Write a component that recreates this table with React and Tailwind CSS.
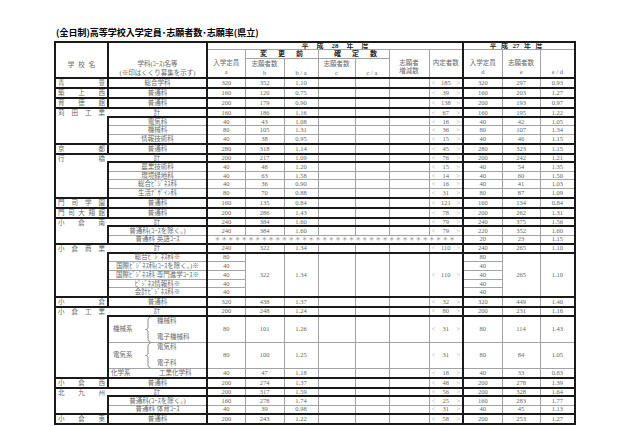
import React from "react";

// border helpers (collapsed table, wider border wins)
const base = "border border-[#a3a3a3] p-0 text-center";
const T = "border-t-2 border-t-[#1a1a1a]";
const R = "border-r-2 border-r-[#1a1a1a]";
const L = "border-l-2 border-l-[#1a1a1a]";
const rowH = "h-[8.8px]";

const STARS = "＊".repeat(36);

function Name({ name }) {
  return (
    <div className="flex h-[8px] items-center justify-between px-[2px]">
      {[...name].map((c, i) => (
        <span key={i}>{c}</span>
      ))}
    </div>
  );
}

function Nt({ v }) {
  return (
    <div className="flex items-center justify-between px-[2px]">
      <span className="text-[#b0b0b0]">&lt;</span>
      <span>{v}</span>
      <span className="text-[#b0b0b0]">&gt;</span>
    </div>
  );
}

// v = [a, b, b/a, naitei, d, e, e/d]
function Vals({ v, top }) {
  const t = top ? T : "";
  return (
    <>
      <td className={`${base} ${t}`}>{v[0]}</td>
      <td className={`${base} ${t}`}>{v[1]}</td>
      <td className={`${base} ${t}`}>{v[2]}</td>
      <td className={`${base} ${t}`}></td>
      <td className={`${base} ${t}`}></td>
      <td className={`${base} ${t}`}></td>
      <td className={`${base} ${t} ${R}`}>
        <Nt v={v[3]} />
      </td>
      <td className={`${base} ${t}`}>{v[4]}</td>
      <td className={`${base} ${t}`}>{v[5]}</td>
      <td className={`${base} ${t}`}>{v[6]}</td>
    </>
  );
}

function Single({ name, dept, v }) {
  return (
    <tr className={rowH}>
      <td className={`${base} ${T} ${L} ${R}`}>
        <Name name={name} />
      </td>
      <td className={`${base} ${T} ${R}`}>{dept}</td>
      <Vals v={v} top />
    </tr>
  );
}

function Multi({ name, v, subs }) {
  return (
    <>
      <tr className={rowH}>
        <td rowSpan={1 + subs.length} className={`${base} ${T} ${L} border-r-0 align-top`}>
          <Name name={name} />
        </td>
        <td className={`${base} ${T} ${R} border-l-0`}>計</td>
        <Vals v={v} top />
      </tr>
      {subs.map((s, i) => (
        <tr key={i} className={rowH}>
          <td className={`${base} ${L} ${R} ${i === 0 ? T : ""}`}>{s[0]}</td>
          <Vals v={s.slice(1)} top={i === 0} />
        </tr>
      ))}
    </>
  );
}

function Brace() {
  return (
    <svg width="6" height="25" viewBox="0 0 6 26" className="shrink-0">
      <path
        d="M5.5 0.5 C3.5 0.5 3 1.5 3 3.5 L3 10.5 C3 12.3 2 13 0.5 13 C2 13 3 13.7 3 15.5 L3 22.5 C3 24.5 3.5 25.5 5.5 25.5"
        fill="none"
        stroke="#6a6a6a"
        strokeWidth="0.8"
      />
    </svg>
  );
}

function Kei({ label, a, b }) {
  return (
    <div className="flex items-center pl-[4px]">
      <span className="w-[32px] text-left">{label}</span>
      <Brace />
      <div className="ml-[6px] flex h-[22px] flex-col justify-between text-left">
        <span>{a}</span>
        <span>{b}</span>
      </div>
    </div>
  );
}

function Header() {
  const hb = "font-bold text-[#262626] text-[7px]";
  return (
    <thead>
      <tr className="h-[8.2px]">
        <td rowSpan={3} className={`${base} ${L} ${R} align-top`}>
          <div className="pl-[4px] pt-[17px] leading-[9px] tracking-[4px]">学校名</div>
        </td>
        <td rowSpan={3} className={`${base} ${R} align-top`}>
          <div className="pt-[16.5px] leading-[9px]">
            <div>学科(ｺｰｽ)名等</div>
            <div>(※印はくくり募集を示す)</div>
          </div>
        </td>
        <td colSpan={7} className={`${base} ${R}`}>
          <div className={`flex justify-center gap-[8px] ${hb}`}>
            <span>平</span>
            <span>成</span>
            <span>28</span>
            <span>年</span>
            <span>度</span>
          </div>
        </td>
        <td colSpan={3} className={`${base}`}>
          <div className={`flex justify-center gap-[4.5px] pr-[6px] ${hb}`}>
            <span>平</span>
            <span>成</span>
            <span>27</span>
            <span>年</span>
            <span>度</span>
          </div>
        </td>
      </tr>
      <tr className="h-[8.5px]">
        <td rowSpan={2} className={`${base} align-bottom`}>
          <div className="pb-[0.5px] leading-[9.5px]">
            <div>入学定員</div>
            <div>a</div>
          </div>
        </td>
        <td colSpan={2} className={`${base}`}>
          <div className={`flex justify-center gap-[11px] ${hb}`}>
            <span>変</span>
            <span>更</span>
            <span>前</span>
          </div>
        </td>
        <td colSpan={2} className={`${base}`}>
          <div className={`flex justify-center gap-[11px] pl-[4px] ${hb}`}>
            <span>確</span>
            <span>定</span>
            <span>数</span>
          </div>
        </td>
        <td rowSpan={2} className={`${base} align-bottom`}>
          <div className="pb-[1.5px] leading-[8.5px]">
            <div>志願者</div>
            <div>増減数</div>
          </div>
        </td>
        <td rowSpan={2} className={`${base} ${R}`}>
          <div className="pb-[1px]">内定者数</div>
        </td>
        <td rowSpan={2} className={`${base} align-bottom`}>
          <div className="pb-[1px] leading-[9px]">
            <div>入学定員</div>
            <div>d</div>
          </div>
        </td>
        <td rowSpan={2} className={`${base} align-bottom`}>
          <div className="pb-[1px] leading-[9px]">
            <div>志願者数</div>
            <div>e</div>
          </div>
        </td>
        <td rowSpan={2} className={`${base} align-bottom`}>
          <div className="pb-[1px] leading-[9px]">e / d</div>
        </td>
      </tr>
      <tr className="h-[18.2px]">
        <td className={`${base} align-bottom`}>
          <div className="pb-[0.5px] leading-[9px]">
            <div>志願者数</div>
            <div>b</div>
          </div>
        </td>
        <td className={`${base} align-bottom`}>
          <div className="pb-[0.5px] leading-[9px]">b / a</div>
        </td>
        <td className={`${base} align-bottom`}>
          <div className="pb-[0.5px] leading-[9px]">
            <div>志願者数</div>
            <div>c</div>
          </div>
        </td>
        <td className={`${base} align-bottom`}>
          <div className="pb-[0.5px] leading-[9px]">c / a</div>
        </td>
      </tr>
    </thead>
  );
}

export default function App() {
  return (
    <div className="min-h-[426px] w-[640px] bg-white pl-[54px] pt-[27px]">
      <div className="pl-[2px] font-['Noto_Sans_CJK_JP',sans-serif] text-[9px] font-bold leading-[12px] text-black">
        (全日制)高等学校入学定員･志願者数･志願率(県立)
      </div>
      <table className="mt-[1.7px] w-[520px] table-fixed border-collapse border-2 border-[#1a1a1a] font-['Liberation_Serif','Noto_Sans_CJK_JP',serif] text-[6.5px] leading-[6px] text-[#666]">
        <colgroup>
          <col className="w-[53px]" />
          <col className="w-[99px]" />
          <col className="w-[38px]" />
          <col className="w-[39px]" />
          <col className="w-[34px]" />
          <col className="w-[37px]" />
          <col className="w-[34px]" />
          <col className="w-[40px]" />
          <col className="w-[34px]" />
          <col className="w-[39px]" />
          <col className="w-[38px]" />
          <col className="w-[35px]" />
        </colgroup>
        <Header />
        <tbody>
          <Single name="青豊" dept="総合学科" v={["320", "352", "1.10", "185", "320", "297", "0.93"]} />
          <Single name="築上西" dept="普通科" v={["160", "120", "0.75", "39", "160", "203", "1.27"]} />
          <Single name="育徳館" dept="普通科" v={["200", "179", "0.90", "138", "200", "193", "0.97"]} />
          <Multi
            name="苅田工業"
            v={["160", "186", "1.16", "67", "160", "195", "1.22"]}
            subs={[
              ["電気科", "40", "43", "1.08", "16", "40", "42", "1.05"],
              ["機械科", "80", "105", "1.31", "36", "80", "107", "1.34"],
              ["情報技術科", "40", "38", "0.95", "15", "40", "46", "1.15"],
            ]}
          />
          <Single name="京都" dept="普通科" v={["280", "318", "1.14", "45", "280", "323", "1.15"]} />
          <Multi
            name="行橋"
            v={["200", "217", "1.09", "76", "200", "242", "1.21"]}
            subs={[
              ["農業技術科", "40", "48", "1.20", "15", "40", "54", "1.35"],
              ["環境緑地科", "40", "63", "1.58", "14", "40", "60", "1.50"],
              ["総合ﾋﾞｼﾞﾈｽ科", "40", "36", "0.90", "16", "40", "41", "1.03"],
              ["生活ﾃﾞｻﾞｲﾝ科", "80", "70", "0.88", "31", "80", "87", "1.09"],
            ]}
          />
          <Single name="門司学園" dept="普通科" v={["160", "135", "0.84", "121", "160", "134", "0.84"]} />
          <Single name="門司大翔館" dept="普通科" v={["200", "286", "1.43", "78", "200", "262", "1.31"]} />

          {/* 小倉南 */}
          <tr className={rowH}>
            <td rowSpan={3} className={`${base} ${T} ${L} border-r-0 align-top`}>
              <Name name="小倉南" />
            </td>
            <td className={`${base} ${T} ${R} border-l-0`}>計</td>
            <Vals v={["240", "384", "1.60", "79", "240", "375", "1.56"]} top />
          </tr>
          <tr className={rowH}>
            <td className={`${base} ${T} ${L} ${R}`}>普通科(ｺｰｽを除く。)</td>
            <Vals v={["240", "384", "1.60", "79", "220", "352", "1.60"]} top />
          </tr>
          <tr className={rowH}>
            <td className={`${base} ${L} ${R}`}>普通科 英語ｺｰｽ</td>
            <td colSpan={7} className={`${base} ${R} text-[6px] tracking-[0.7px] text-[#8a8a8a]`}>
              {STARS}
            </td>
            <td className={base}>20</td>
            <td className={base}>23</td>
            <td className={base}>1.15</td>
          </tr>

          {/* 小倉商業 */}
          <tr className={rowH}>
            <td rowSpan={6} className={`${base} ${T} ${L} border-r-0 align-top`}>
              <Name name="小倉商業" />
            </td>
            <td className={`${base} ${T} ${R} border-l-0`}>計</td>
            <Vals v={["240", "322", "1.34", "110", "240", "265", "1.10"]} top />
          </tr>
          <tr className={rowH}>
            <td className={`${base} ${T} ${L} ${R}`}>総合ﾋﾞｼﾞﾈｽ科※</td>
            <td className={`${base} ${T}`}>80</td>
            <td rowSpan={5} className={`${base} ${T}`}>322</td>
            <td rowSpan={5} className={`${base} ${T}`}>1.34</td>
            <td rowSpan={5} className={`${base} ${T}`}></td>
            <td rowSpan={5} className={`${base} ${T}`}></td>
            <td rowSpan={5} className={`${base} ${T}`}></td>
            <td rowSpan={5} className={`${base} ${T} ${R}`}>
              <Nt v="110" />
            </td>
            <td className={`${base} ${T}`}>80</td>
            <td rowSpan={5} className={`${base} ${T}`}>265</td>
            <td rowSpan={5} className={`${base} ${T}`}>1.10</td>
          </tr>
          <tr className={rowH}>
            <td className={`${base} ${L} ${R}`}>国際ﾋﾞｼﾞﾈｽ科(ｺｰｽを除く。)※</td>
            <td className={base}>40</td>
            <td className={base}>40</td>
          </tr>
          <tr className={rowH}>
            <td className={`${base} ${L} ${R}`}>国際ﾋﾞｼﾞﾈｽ科 専門進学ｺｰｽ※</td>
            <td className={base}>40</td>
            <td className={base}>40</td>
          </tr>
          <tr className={rowH}>
            <td className={`${base} ${L} ${R}`}>ﾋﾞｼﾞﾈｽ情報科※</td>
            <td className={base}>40</td>
            <td className={base}>40</td>
          </tr>
          <tr className={rowH}>
            <td className={`${base} ${L} ${R}`}>会計ﾋﾞｼﾞﾈｽ科※</td>
            <td className={base}>40</td>
            <td className={base}>40</td>
          </tr>

          <Single name="小倉" dept="普通科" v={["320", "438", "1.37", "32", "320", "449", "1.40"]} />

          {/* 小倉工業 */}
          <tr className={rowH}>
            <td rowSpan={4} className={`${base} ${T} ${L} border-r-0 align-top`}>
              <Name name="小倉工業" />
            </td>
            <td className={`${base} ${T} ${R} border-l-0`}>計</td>
            <Vals v={["200", "248", "1.24", "80", "200", "231", "1.16"]} top />
          </tr>
          <tr className="h-[26.6px]">
            <td className={`${base} ${T} ${L} ${R}`}>
              <Kei label="機械系" a="機械科" b="電子機械科" />
            </td>
            <Vals v={["80", "101", "1.26", "31", "80", "114", "1.43"]} top />
          </tr>
          <tr className="h-[26.6px]">
            <td className={`${base} ${L} ${R}`}>
              <Kei label="電気系" a="電気科" b="電子科" />
            </td>
            <Vals v={["80", "100", "1.25", "31", "80", "84", "1.05"]} />
          </tr>
          <tr className={rowH}>
            <td className={`${base} ${L} ${R}`}>
              <div className="flex pl-[2px]">
                <span className="w-[48px] text-left">化学系</span>
                <span>工業化学科</span>
              </div>
            </td>
            <Vals v={["40", "47", "1.18", "18", "40", "33", "0.83"]} />
          </tr>

          <Single name="小倉西" dept="普通科" v={["200", "274", "1.37", "48", "200", "278", "1.39"]} />
          <Multi
            name="北九州"
            v={["200", "317", "1.59", "56", "200", "328", "1.64"]}
            subs={[
              ["普通科(ｺｰｽを除く。)", "160", "278", "1.74", "25", "160", "283", "1.77"],
              ["普通科 体育ｺｰｽ", "40", "39", "0.98", "31", "40", "45", "1.13"],
            ]}
          />
          <Single name="小倉東" dept="普通科" v={["200", "243", "1.22", "58", "200", "253", "1.27"]} />
        </tbody>
      </table>
    </div>
  );
}
